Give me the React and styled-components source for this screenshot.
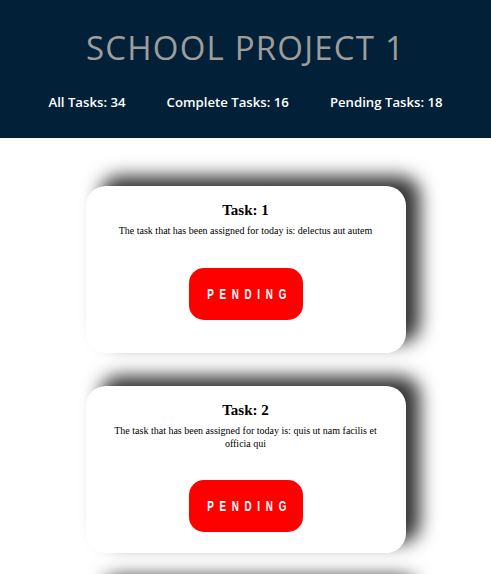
import React from "react";
import styled, { createGlobalStyle } from "styled-components";

const GlobalStyle = createGlobalStyle`
  html, body { margin: 0; padding: 0; background: #ffffff; }
  body { font-family: "Liberation Serif", "Times New Roman", serif; }
  * { box-sizing: border-box; }
`;

const Page = styled.div`
  display: flex;
  flex-direction: column;
  min-height: 574px;
`;

const Header = styled.header`
  background: #022037;
  height: 138px;
  display: flex;
  flex-direction: column;
  align-items: center;
  padding-top: 26px;
  font-family: "Open Sans", "Noto Sans", sans-serif;
`;

const Title = styled.h1`
  margin: 0;
  font-size: 33px;
  line-height: 43px;
  font-weight: 500;
  color: #9e9d9b;
  letter-spacing: 1.2px;
`;

const Stats = styled.div`
  display: flex;
  gap: 41px;
  margin-top: 23px;
`;

const Stat = styled.span`
  color: #ffffff;
  font-size: 13.2px;
  font-weight: 600;
  line-height: 20px;
`;

const List = styled.main`
  display: flex;
  flex-direction: column;
  align-items: center;
  gap: 33px;
  padding-top: 48px;
`;

const Card = styled.section`
  width: 320px;
  height: 167px;
  flex: none;
  background: #ffffff;
  border-radius: 20px;
  box-shadow: 14px -10px 18px rgba(0, 0, 0, 0.8);
  display: flex;
  flex-direction: column;
  align-items: center;
  padding: 15px 22px 0;
  text-align: center;
`;

const TaskTitle = styled.h3`
  margin: 0;
  font-size: 15px;
  line-height: 18px;
  font-weight: 700;
  color: #000;
`;

const TaskText = styled.p`
  margin: 6px 0 0;
  font-size: 10px;
  line-height: 12.5px;
  color: #000;
`;

const StatusButton = styled.button`
  margin-top: 30px;
  width: 114px;
  height: 52px;
  flex: none;
  border: none;
  border-radius: 15px;
  background: ${(p) => (p.$done ? "#14a614" : "#fe0000")};
  display: flex;
  align-items: center;
  justify-content: center;
  padding: 0;
  cursor: pointer;
`;

const ButtonLabel = styled.span`
  display: inline-block;
  color: #ffffff;
  font-family: "Liberation Sans", "Arial", sans-serif;
  font-weight: 700;
  font-size: 14px;
  line-height: 14px;
  letter-spacing: 8.2px;
  margin-right: -8.2px;
  transform: scaleX(0.7);
`;

const tasks = [
  { id: 1, text: "delectus aut autem" },
  { id: 2, text: "quis ut nam facilis et officia qui" },
  { id: 3, text: "fugiat veniam minus" },
];

export default function App() {
  return (
    <Page>
      <GlobalStyle />
      <Header>
        <Title>SCHOOL PROJECT 1</Title>
        <Stats>
          <Stat>All Tasks: 34</Stat>
          <Stat>Complete Tasks: 16</Stat>
          <Stat>Pending Tasks: 18</Stat>
        </Stats>
      </Header>
      <List>
        {tasks.map((t) => (
          <Card key={t.id}>
            <TaskTitle>Task: {t.id}</TaskTitle>
            <TaskText>The task that has been assigned for today is: {t.text}</TaskText>
            <StatusButton>
              <ButtonLabel>PENDING</ButtonLabel>
            </StatusButton>
          </Card>
        ))}
      </List>
    </Page>
  );
}
